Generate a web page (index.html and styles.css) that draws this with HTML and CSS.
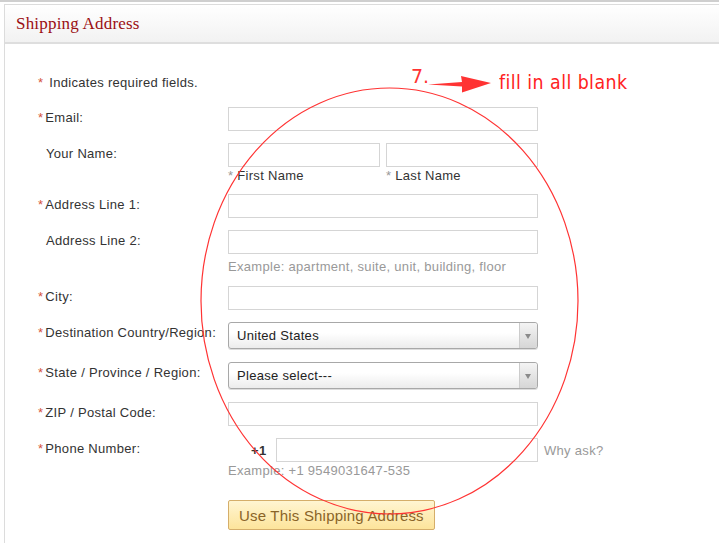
FILE: index.html
```html
<!DOCTYPE html>
<html lang="en">
<head>
    <meta charset="UTF-8">
    <title>Shipping Address</title>
    <link rel="stylesheet" href="styles.css">
</head>
<body>
    <div class="topline"></div>
    <div class="panel">
        <div class="panel-head">Shipping Address</div>

        <div class="form">
            <div class="note"><span class="req">*</span> Indicates required fields.</div>

            <div class="row">
                <label class="lbl"><span class="req">*</span>Email:</label>
                <div class="field"><input class="txt" type="text"></div>
            </div>

            <div class="row row-sub">
                <label class="lbl plain">Your Name:</label>
                <div class="field">
                    <div class="pair">
                        <div class="half">
                            <input class="txt" type="text">
                            <div class="sub"><span class="star">*</span> First Name</div>
                        </div>
                        <div class="half">
                            <input class="txt" type="text">
                            <div class="sub"><span class="star">*</span> Last Name</div>
                        </div>
                    </div>
                </div>
            </div>

            <div class="row">
                <label class="lbl"><span class="req">*</span>Address Line 1:</label>
                <div class="field"><input class="txt" type="text"></div>
            </div>

            <div class="row">
                <label class="lbl plain">Address Line 2:</label>
                <div class="field">
                    <input class="txt" type="text">
                    <div class="hint">Example: apartment, suite, unit, building, floor</div>
                </div>
            </div>

            <div class="row">
                <label class="lbl"><span class="req">*</span>City:</label>
                <div class="field"><input class="txt" type="text"></div>
            </div>

            <div class="row row-sel">
                <label class="lbl"><span class="req">*</span>Destination Country/Region:</label>
                <div class="field">
                    <div class="sel"><span>United States</span><i class="sel-btn"></i></div>
                </div>
            </div>

            <div class="row row-sel">
                <label class="lbl"><span class="req">*</span>State / Province / Region:</label>
                <div class="field">
                    <div class="sel"><span>Please select---</span><i class="sel-btn"></i></div>
                </div>
            </div>

            <div class="row">
                <label class="lbl"><span class="req">*</span>ZIP / Postal Code:</label>
                <div class="field"><input class="txt" type="text"></div>
            </div>

            <div class="row">
                <label class="lbl"><span class="req">*</span>Phone Number:</label>
                <div class="field">
                    <div class="phone">
                        <b class="code">+1</b>
                        <input class="txt" type="text">
                        <span class="why">Why ask?</span>
                    </div>
                    <div class="hint hint-phone">Example: +1 9549031647-535</div>
                </div>
            </div>

            <div class="row">
                <div class="lbl"></div>
                <div class="field"><button class="btn">Use This Shipping Address</button></div>
            </div>
        </div>
    </div>

    <!-- hand drawn note on top of the page -->
    <div class="mark">
        <svg width="719" height="543" viewBox="0 0 719 543">
            <ellipse cx="389.5" cy="301" rx="188.5" ry="213" fill="none" stroke="#f33" stroke-width="1.2"/>
            <path d="M428 84.5 L462 82 L461 76 L491 83 L462 92.5 L462 86.5 Z" fill="#f33"/>
        </svg>
        <span class="mark-num">7.</span>
        <span class="mark-text">fill in all blank</span>
    </div>
</body>
</html>
```

FILE: styles.css
```css
* { margin: 0; padding: 0; box-sizing: border-box; }
body {
    font-family: "Liberation Sans", Arial, sans-serif;
    font-size: 13px; letter-spacing: 0.3px; color: #333; background: #fff;
    width: 719px; height: 543px; overflow: hidden; position: relative;
}
.topline { height: 2px; background: #cfcfcf; margin-bottom: 2px; }
.panel {
    margin-left: 4px; width: 715px; height: 539px; overflow: hidden;
    border: 1px solid #dcdcdc; border-right: none; border-bottom: none;
}
.panel-head {
    height: 39px; line-height: 38px; padding-left: 11px;
    font-family: "Liberation Serif", Georgia, serif; font-size: 17px; letter-spacing: 0.2px; color: #9b0f13;
    background: linear-gradient(#ffffff, #f2f2f2);
    border-bottom: 2px solid #dedede;
}
.form { padding: 31px 0 0 33px; }
.note { margin-bottom: 16px; line-height: 16px; }
.req { color: #d5543a; margin-right: 2px; }
.row { display: flex; margin-bottom: 12px; }
.row-sel { margin-bottom: 13px; }
.lbl { width: 190px; flex: none; padding-top: 3px; line-height: 16px; }
.lbl.plain { padding-left: 8px; }
.field { width: 310px; }
.txt {
    display: block; width: 100%; height: 24px;
    border: 1px solid #d5d5d5; background: #fff; outline: none;
}
.pair { display: flex; gap: 6px; }
.half { flex: 1; }
.sub { line-height: 16px; padding-top: 1px; margin-bottom: -2px; }
.star { color: #999; }
.hint { color: #999; line-height: 16px; padding-top: 5px; margin-bottom: -1px; }
.hint-phone { padding-top: 1px; }
.sel {
    display: flex; align-items: center; height: 27px;
    border: 1px solid #a8a8a8; border-radius: 3px;
    background: linear-gradient(#ffffff 40%, #ececec);
    box-shadow: 0 1px 0 #ddd;
}
.sel span { flex: 1; padding-left: 8px; color: #222; }
.sel-btn {
    width: 18px; height: 100%; position: relative;
    border-left: 1px solid #ccc; border-radius: 0 3px 3px 0;
    background: linear-gradient(#f4f4f4, #d6d6d6);
}
.sel-btn::after {
    content: ""; position: absolute; left: 5px; top: 11px;
    border-left: 3.5px solid transparent; border-right: 3.5px solid transparent;
    border-top: 5px solid #8a8a8a;
}
.phone { display: flex; align-items: center; width: 380px; }
.code { width: 48px; padding-left: 23px; font-weight: bold; font-size: 13px; color: #333; }
.phone .txt { width: 262px; }
.why { color: #999; margin-left: 6px; }
.btn {
    margin-top: 10px; height: 30px; padding: 0 10px;
    font-family: "Liberation Sans", Arial, sans-serif; font-size: 15px; letter-spacing: 0.2px; color: #8a6428;
    background: linear-gradient(#fff5d2, #fde49b);
    border: 1px solid #d5ae6a; border-radius: 2px;
}
.mark { position: absolute; left: 0; top: 0; width: 719px; height: 543px; pointer-events: none; }
.mark svg { position: absolute; left: 0; top: 0; }
.mark-num {
    position: absolute; left: 411px; top: 65px;
    font-family: "DejaVu Sans", sans-serif; font-size: 19px; letter-spacing: 0; color: #f33;
}
.mark-text {
    position: absolute; left: 499px; top: 70px;
    font-family: "DejaVu Sans", sans-serif; font-size: 20px; color: #f22;
    letter-spacing: 0.5px; transform: scaleX(0.87); transform-origin: left;
}
```
